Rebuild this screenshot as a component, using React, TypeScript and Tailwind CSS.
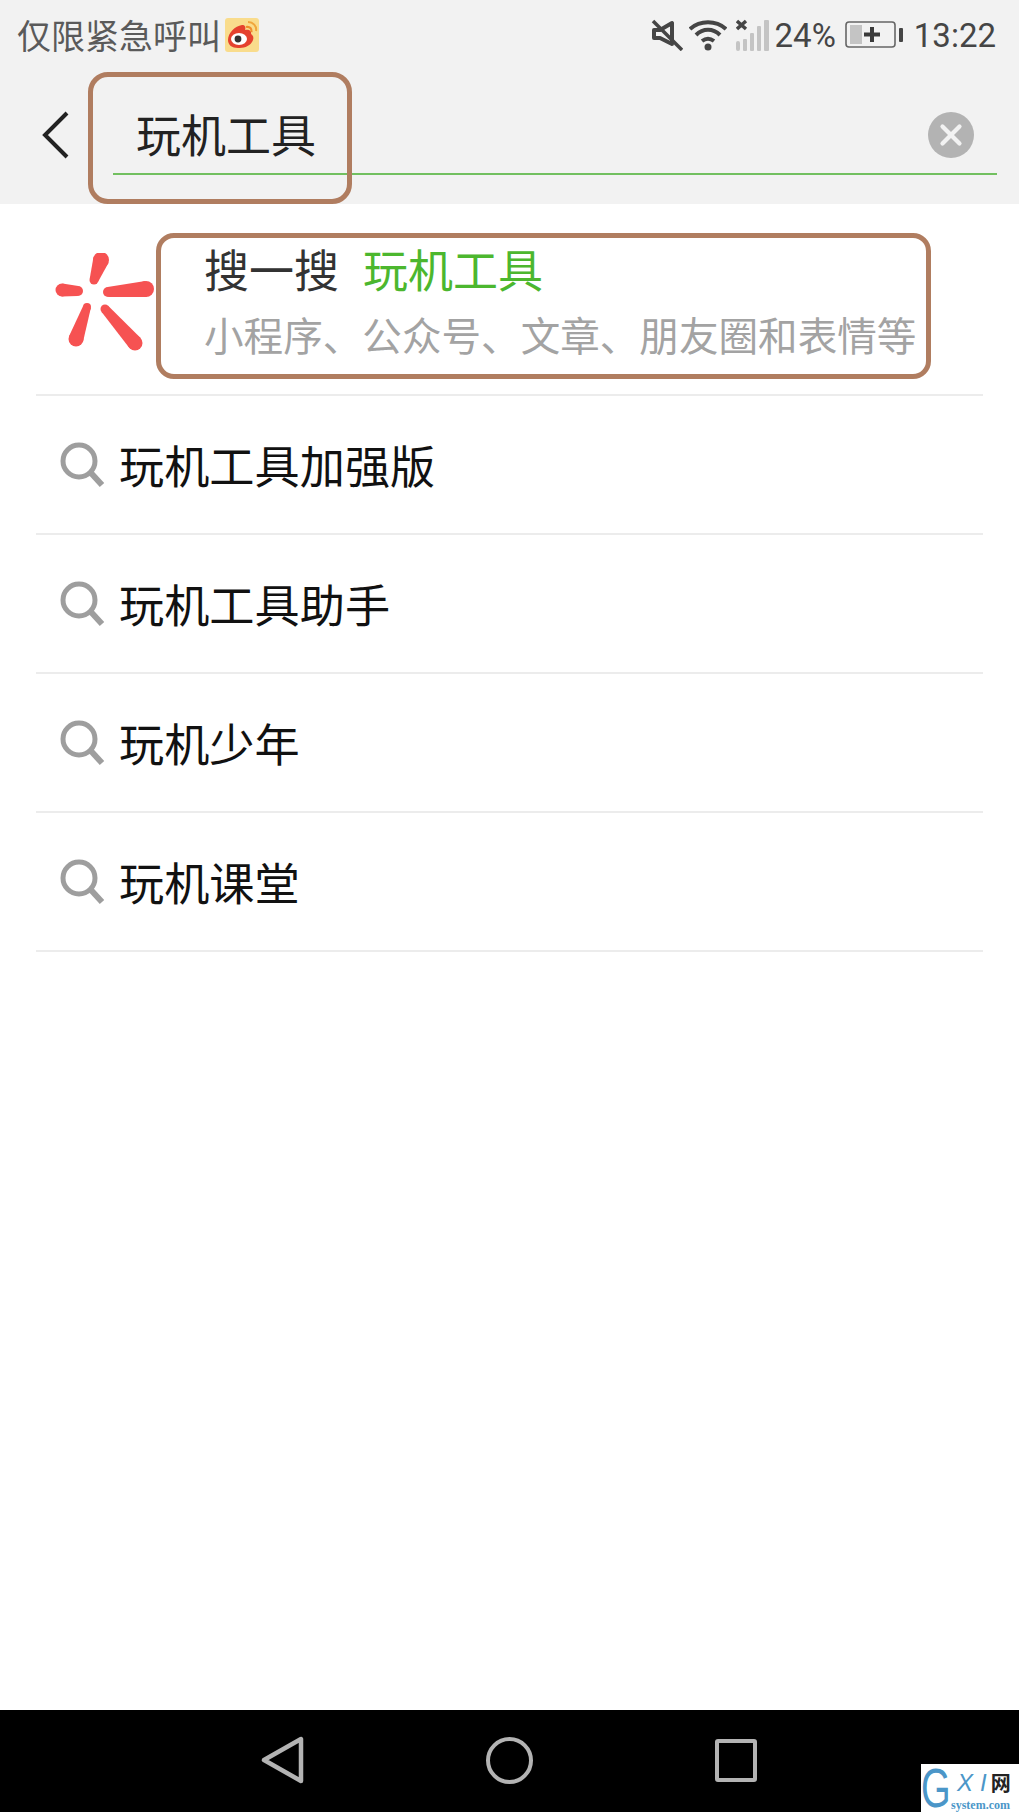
import { X } from "lucide-react";

const cjk = "font-['Noto_Sans_CJK_SC','Noto_Sans',sans-serif]";

const suggestions = ["玩机工具加强版", "玩机工具助手", "玩机少年", "玩机课堂"];

// one tapered arm of the search logo: a hull between two round ends
const Petal = ({ x1, y1, r1, x2, y2, r2 }: { x1: number; y1: number; r1: number; x2: number; y2: number; r2: number }) => {
  const len = Math.hypot(x2 - x1, y2 - y1);
  const nx = (y2 - y1) / len;
  const ny = -(x2 - x1) / len;
  const d = `M${x1 + nx * r1} ${y1 + ny * r1} L${x2 + nx * r2} ${y2 + ny * r2} L${x2 - nx * r2} ${y2 - ny * r2} L${x1 - nx * r1} ${y1 - ny * r1} Z`;
  return (
    <g fill="#f65252">
      <path d={d} />
      <circle cx={x1} cy={y1} r={r1} />
      <circle cx={x2} cy={y2} r={r2} />
    </g>
  );
};

const SearchGlyph = () => (
  <svg width="46" height="46" viewBox="0 0 46 46" fill="none" className="shrink-0">
    <circle cx="20" cy="19" r="16" stroke="#9e9e9e" strokeWidth="5" />
    <path d="M32 31 L43 43" stroke="#9e9e9e" strokeWidth="6" />
  </svg>
);

const Weibo = () => (
  <svg width="34" height="34" viewBox="0 0 34 34" className="ml-[4px] shrink-0">
    <rect width="34" height="34" rx="3" fill="#f9dc8c" />
    <path d="M3 22 C3 15 10 8 17 7 C20 7 21 9 20 12 C24 11 27 13 26 16 C29 18 29 21 27 24 C24 29 18 30 13 30 C7 30 3 27 3 22 Z" fill="#e5412e" />
    <ellipse cx="14" cy="21" rx="8" ry="6" fill="#fff" />
    <circle cx="13" cy="21" r="3.4" fill="#333" />
    <path d="M21 9 C25 8 27 11 26.5 14" stroke="#ef8c2c" strokeWidth="2.2" fill="none" />
    <path d="M23 4 C28 4 32 8 31 13" stroke="#f0a63c" strokeWidth="2" fill="none" />
  </svg>
);

const StatusIcons = () => (
  <>
    <svg width="32" height="32" viewBox="0 0 32 32" fill="none">
      <path d="M3 11 H9 L21 4 V25 L9 19 H3 Z" stroke="#454545" strokeWidth="4" strokeLinejoin="round" />
      <path d="M2 2 L31 31" stroke="#454545" strokeWidth="3.5" />
    </svg>
    <svg width="38" height="32" viewBox="0 0 38 32" fill="none" className="ml-[6px]">
      <path d="M1 10 C11 1 27 1 37 10" stroke="#454545" strokeWidth="4" />
      <path d="M7 16 C14 9 24 9 31 16" stroke="#454545" strokeWidth="4" />
      <path d="M13 22 C17 19 21 19 25 22" stroke="#454545" strokeWidth="4" />
      <circle cx="19" cy="28" r="3.5" fill="#454545" />
    </svg>
    <svg width="34" height="32" viewBox="0 0 34 32" fill="none" className="ml-[9px]">
      <path d="M1 2 L10 10 M10 2 L1 10" stroke="#454545" strokeWidth="3.4" />
      <rect x="0" y="22" width="4" height="10" rx="2" fill="#c4c4c4" />
      <rect x="7" y="20" width="4" height="12" rx="1" fill="#c4c4c4" />
      <rect x="14" y="14" width="4" height="18" rx="1" fill="#c4c4c4" />
      <rect x="21" y="7" width="4" height="25" rx="1" fill="#c4c4c4" />
      <rect x="28" y="1" width="5" height="31" rx="1" fill="#c4c4c4" />
    </svg>
    <span className="ml-[5px] text-[33px] leading-none font-['Roboto',sans-serif] text-[#454545]">24%</span>
    <svg width="60" height="28" viewBox="0 0 60 28" fill="none" className="ml-[9px]">
      <rect x="1" y="1" width="49" height="25" rx="3" stroke="#666" strokeWidth="1.6" />
      <rect x="5" y="4" width="12" height="19" fill="#c4c4c4" />
      <path d="M19 13.5 H35 M27 6 V21" stroke="#3a3a3a" strokeWidth="4" />
      <rect x="54" y="7" width="4" height="14" rx="1" fill="#454545" />
    </svg>
    <span className="ml-[9px] text-[33px] leading-none font-['Roboto',sans-serif] text-[#454545]">13:22</span>
  </>
);

const NavBar = () => (
  <div className="flex h-[102px] items-center bg-black pb-[2px]">
    <div className="flex w-full items-center pl-[261px]">
      <svg width="44" height="48" viewBox="0 0 44 48" fill="none">
        <path d="M40 3 V45 L3 24 Z" stroke="#b3b3b3" strokeWidth="4.5" strokeLinejoin="round" />
      </svg>
      <div className="ml-[181px] h-[47px] w-[47px] rounded-full border-[4px] border-[#b3b3b3]" />
      <div className="ml-[182px] h-[43px] w-[42px] rounded-[3px] border-[4px] border-[#b3b3b3]" />
    </div>
  </div>
);

export default function App() {
  return (
    <div className={`relative flex h-[1812px] w-[1019px] flex-col overflow-hidden bg-white ${cjk}`}>
      <header className="h-[204px] bg-[#f2f2f2]">
        <div className="flex h-[70px] items-center pl-[17px] pr-[23px]">
          <span className="text-[34px] leading-none text-[#5a5a5a]">仅限紧急呼叫</span>
          <Weibo />
          <div className="ml-auto flex items-center">
            <StatusIcons />
          </div>
        </div>
        <div className="flex h-[134px] pl-[40px] pr-[22px] pt-[24px]">
          <svg width="32" height="50" viewBox="0 0 32 50" fill="none" className="mt-[16px] shrink-0">
            <path d="M27 3 L5 25 L27 47" stroke="#222" strokeWidth="4" />
          </svg>
          <div className="ml-[41px] flex h-[81px] flex-1 items-center justify-between border-b-2 border-[#72c060] pl-[23px] pr-[23px]">
            <span className="text-[45px] leading-none text-[#222]">玩机工具</span>
            <span className="mt-[3px] flex h-[46px] w-[46px] items-center justify-center rounded-full bg-[#b3b3b3]">
              <X size={34} color="#f2f2f2" strokeWidth={3} />
            </span>
          </div>
        </div>
      </header>

      <main className="flex flex-1 flex-col px-[36px]">
        <div className="flex h-[192px] items-start border-b-2 border-[#ececec] pt-[35px]">
          <svg width="100" height="100" viewBox="0 0 100 100" className="ml-[18px] mt-[14px] shrink-0">
            <Petal x1={47} y1={7} r1={8} x2={40} y2={27} r2={4.5} />
            <Petal x1={8} y1={37} r1={6.5} x2={24} y2={38} r2={5} />
            <Petal x1={54} y1={39} r1={5} x2={92} y2={36} r2={8} />
            <Petal x1={33} y1={54} r1={4} x2={22} y2={86} r2={7.5} />
            <Petal x1={51} y1={56} r1={4.5} x2={81} y2={90} r2={7.5} />
          </svg>
          <div className="ml-[50px] flex flex-col">
            <div className="flex text-[45px] leading-[60px] text-[#333]">
              <span>搜一搜</span>
              <span className="ml-[24px] text-[#4cb72e]">玩机工具</span>
            </div>
            <div className="mt-[10px] whitespace-nowrap text-[39.6px] leading-[50px] text-[#a3a3a3]">
              小程序、公众号、文章、朋友圈和表情等
            </div>
          </div>
        </div>
        {suggestions.map((text) => (
          <div key={text} className="flex h-[139px] items-center border-b-2 border-[#ececec]">
            <div className="ml-[23px]">
              <SearchGlyph />
            </div>
            <span className="ml-[14px] text-[45.2px] leading-none text-[#111]">{text}</span>
          </div>
        ))}
      </main>

      <NavBar />

      {/* hand-drawn callout frames */}
      <div className="absolute left-[88px] top-[72px] h-[132px] w-[264px] rounded-[20px] border-[5px] border-[#b07d60]" />
      <div className="absolute left-[156px] top-[233px] h-[146px] w-[775px] rounded-[18px] border-[5px] border-[#b07d60]" />

      {/* site stamp */}
      <div className="absolute bottom-0 right-0 flex h-[48px] w-[98px] items-end bg-white font-['Liberation_Sans',sans-serif]">
        <span className="w-[30px] shrink-0 origin-left scale-x-[0.68] text-[56px] leading-[48px] text-[#4b96c8]">G</span>
        <div className="flex flex-col">
          <div className="flex items-center text-[24px] leading-[30px] text-[#4b96c8]">
            <span className="ml-[6px] italic">X</span>
            <span className="ml-[7px] italic">I</span>
            <span className={`ml-[4px] text-[20px] font-bold text-[#222] ${cjk}`}>网</span>
          </div>
          <span className="font-['Liberation_Serif',serif] text-[12px] font-bold leading-[14px] text-[#4b96c8]">system.com</span>
        </div>
      </div>
    </div>
  );
}
